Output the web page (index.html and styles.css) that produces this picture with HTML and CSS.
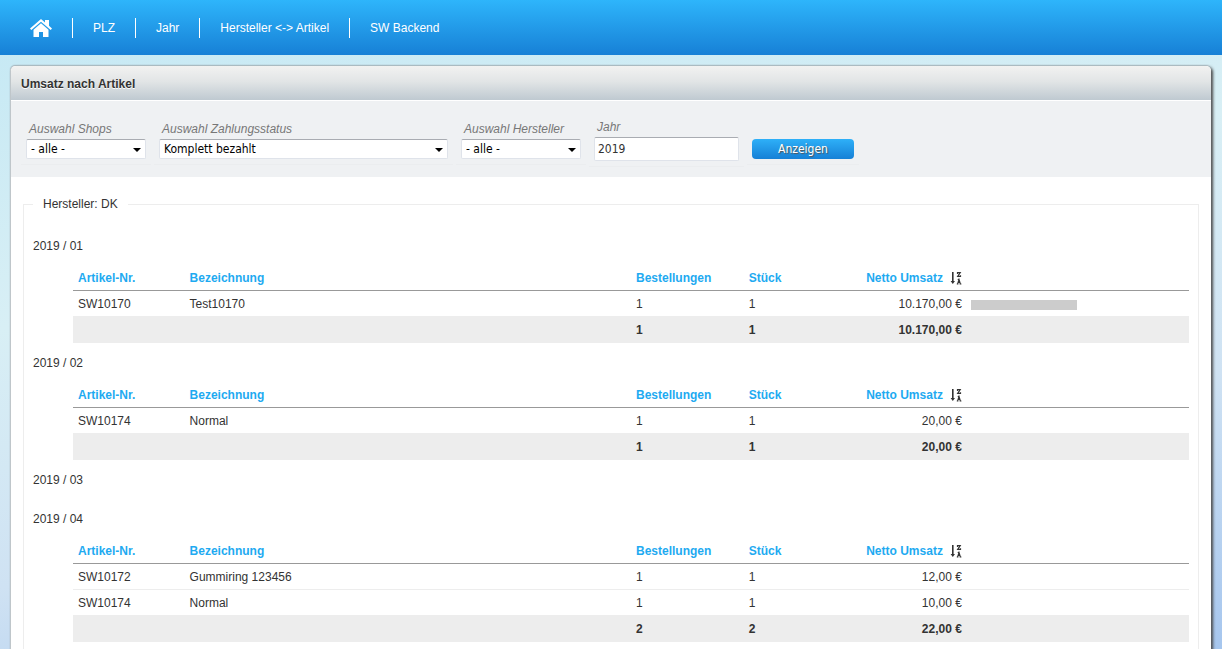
FILE: index.html
```html
<!DOCTYPE html>
<html lang="de">
<head>
<meta charset="utf-8">
<title>Umsatz nach Artikel</title>
<link rel="stylesheet" href="styles.css">
</head>
<body>
<svg class="defs" aria-hidden="true">
  <symbol id="sort" viewBox="0 0 12 13">
    <path d="M2 0h1.600v9H5l-2.200 3L.6 9H2z" fill="#333"/>
    <path d="M7.500 2V.7H10.200L7.700 4.400H10.500V3.200" fill="none" stroke="#333" stroke-width="1.200"/>
    <path d="M7.600 12L9 7.400 10.400 12M8 10.500h2M6.800 12h1.600M9.600 12h1.800M7.700 7.500H9.200" fill="none" stroke="#333" stroke-width="1.100"/>
  </symbol>
</svg>
<header>
  <nav class="nav">
    <a class="nav-item" href="#" aria-label="Startseite">
      <svg class="home" viewBox="0 0 22 18" aria-hidden="true">
        <path d="M11 0L15 3.400V1h4v5.800l3 2.700-1.300 1.500L11 2.700 1.300 11 0 9.500z" fill="#fff"/>
        <path d="M11 4.200l7.500 6.500V18H13v-5H9v5H3.500v-7.300z" fill="#fff"/>
      </svg>
    </a>
    <a class="nav-item" href="#">PLZ</a>
    <a class="nav-item" href="#">Jahr</a>
    <a class="nav-item" href="#">Hersteller &lt;-&gt; Artikel</a>
    <a class="nav-item" href="#">SW Backend</a>
  </nav>
</header>
<main class="panel">
  <h1 class="panel-title">Umsatz nach Artikel</h1>
  <form class="filter">
    <div class="field">
      <label for="shop">Auswahl Shops</label>
      <div class="select"><select id="shop"><option>- alle -</option></select></div>
    </div>
    <div class="field">
      <label for="status">Auswahl Zahlungsstatus</label>
      <div class="select wide"><select id="status"><option>Komplett bezahlt</option></select></div>
    </div>
    <div class="field">
      <label for="maker">Auswahl Hersteller</label>
      <div class="select"><select id="maker"><option>- alle -</option></select></div>
    </div>
    <div class="field">
      <label for="year">Jahr</label>
      <input id="year" type="text" value="2019">
    </div>
    <div class="field action">
      <button type="button">Anzeigen</button>
    </div>
  </form>
  <fieldset class="group">
    <legend>Hersteller: DK</legend>

    <h2 class="month">2019 / 01</h2>
    <table class="sales">
      <thead><tr><th class="c-nr">Artikel-Nr.</th><th class="c-name">Bezeichnung</th><th class="c-orders">Bestellungen</th><th class="c-net">Stück</th><th class="c-sum">Netto Umsatz<svg class="sort" aria-hidden="true"><use href="#sort"/></svg></th><th class="c-bar"></th></tr></thead>
      <tbody><tr><td>SW10170</td><td>Test10170</td><td>1</td><td>1</td><td class="num">10.170,00 €</td><td class="bar-cell"><div class="bar" style="width:50%"></div></td></tr></tbody>
      <tfoot><tr><td></td><td></td><td>1</td><td>1</td><td class="num">10.170,00 €</td><td></td></tr></tfoot>
    </table>

    <h2 class="month">2019 / 02</h2>
    <table class="sales">
      <thead><tr><th class="c-nr">Artikel-Nr.</th><th class="c-name">Bezeichnung</th><th class="c-orders">Bestellungen</th><th class="c-net">Stück</th><th class="c-sum">Netto Umsatz<svg class="sort" aria-hidden="true"><use href="#sort"/></svg></th><th class="c-bar"></th></tr></thead>
      <tbody><tr><td>SW10174</td><td>Normal</td><td>1</td><td>1</td><td class="num">20,00 €</td><td></td></tr></tbody>
      <tfoot><tr><td></td><td></td><td>1</td><td>1</td><td class="num">20,00 €</td><td></td></tr></tfoot>
    </table>

    <h2 class="month">2019 / 03</h2>

    <h2 class="month">2019 / 04</h2>
    <table class="sales">
      <thead><tr><th class="c-nr">Artikel-Nr.</th><th class="c-name">Bezeichnung</th><th class="c-orders">Bestellungen</th><th class="c-net">Stück</th><th class="c-sum">Netto Umsatz<svg class="sort" aria-hidden="true"><use href="#sort"/></svg></th><th class="c-bar"></th></tr></thead>
      <tbody>
        <tr><td>SW10172</td><td>Gummiring 123456</td><td>1</td><td>1</td><td class="num">12,00 €</td><td></td></tr>
        <tr><td>SW10174</td><td>Normal</td><td>1</td><td>1</td><td class="num">10,00 €</td><td></td></tr>
      </tbody>
      <tfoot><tr><td></td><td></td><td>2</td><td>2</td><td class="num">22,00 €</td><td></td></tr></tfoot>
    </table>
  </fieldset>
</main>
</body>
</html>
```

FILE: styles.css
```css
* { box-sizing: border-box; }

body {
  margin: 0;
  height: 100vh;
  overflow: hidden;
  font: 12px/16px "Liberation Sans", Arial, sans-serif;
  color: #333;
  background: linear-gradient(to right, #c4e8f4, #dceff6 60%, #dceff6);
  background: linear-gradient(170deg, #c4e8f4 0%, #d8eff5 38%, #cfe2f3 68%, #a6c6ee 100%);
}

.defs { position: absolute; width: 0; height: 0; }

header {
  height: 55px;
  padding: 18px 10px;
  background: linear-gradient(#2eb5fb, #1780d6);
}

.nav { display: flex; }

.nav-item {
  display: flex;
  align-items: center;
  height: 20px;
  padding: 0 20px;
  border-right: 1px solid #fff;
  color: #fff;
  text-decoration: none;
}

.nav-item:last-child { border-right: 0; }

.home { width: 22px; height: 18px; }

.panel {
  margin: 11px 11px 10px 10px;
  border-left: 1px solid #bfc6ca;
  border-radius: 5px 5px 0 0;
  background: #fff;
  box-shadow: 0 -1px 1px #a9b8be, 2px 1px 3px #444;
}

.panel-title {
  margin: 0;
  padding: 10px 10px 8px;
  border-bottom: 1px solid #fff;
  border-radius: 5px 5px 0 0;
  font-size: 12px;
  line-height: 16px;
  text-shadow: 0 1px 0 #fff;
  background: linear-gradient(#f2f2f1, #e2e5e6 45%, #bfc9d1);
}

.filter {
  display: flex;
  align-items: center;
  gap: 3px;
  padding: 17px 10px 10px;
  background: #eff1f3;
}

.field {
  padding: 0 5px 5px;
  border-bottom: 1px solid #ebedef;
}

.field label {
  display: block;
  margin: 0 3px 1px;
  line-height: 18px;
  font-style: italic;
  color: #777;
}

.action { padding-top: 19px; }

.select { position: relative; width: 120px; }
.select.wide { width: 289px; }

.select::after {
  content: "";
  position: absolute;
  right: 5px;
  top: 9px;
  border: 4px solid transparent;
  border-top-color: #000;
  border-bottom: 0;
  pointer-events: none;
}

select, input, button {
  display: block;
  font: 12px "DejaVu Sans Condensed", Tahoma, sans-serif;
}

select, input {
  width: 100%;
  border: 1px solid #dfe3ea;
  border-top-color: #a9acb2;
  border-radius: 2px;
  background: #fff;
}

select {
  appearance: none;
  height: 20px;
  padding: 0 4px;
  color: #000;
}

input {
  width: 145px;
  height: 24px;
  padding: 0 3px;
  color: #333;
}

button {
  width: 102px;
  height: 20px;
  padding: 0;
  border: 0;
  border-radius: 4px;
  color: #fff;
  text-shadow: 1px 1px 1px #555;
  background: linear-gradient(#2eb0f8, #1680d6);
}

.group {
  margin: 19px 12px 10px;
  padding: 14px 9px 20px;
  border: 1px solid #ededed;
}

.group legend { padding: 0 10px; }

.month {
  margin: 0;
  padding-top: 1px;
  font-size: 12px;
  font-weight: normal;
  line-height: 38px;
}

.sales {
  width: calc(100% - 40px);
  margin-left: 40px;
  table-layout: fixed;
  border-spacing: 0;
}

.sales th, .sales td {
  height: 26px;
  padding: 0 5px;
  border-bottom: 1px solid #ededed;
  text-align: left;
}

.sales th {
  border-bottom-color: #999;
  color: #1eaaf1;
}

.sales .num, .sales .c-sum { text-align: right; }
.sales tfoot td { font-weight: bold; background: #ededed; }
.sales .bar-cell { padding: 2px 5px 0 4px; }

.c-nr { width: 10%; }
.c-name { width: 40%; }
.c-orders { width: 10.1%; }
.c-net { width: 10%; }
.c-sum { width: 10%; }
.c-bar { width: 19.9%; }

.sort {
  width: 12px;
  height: 13px;
  margin-left: 7px;
  vertical-align: -3px;
}

.bar { height: 10px; background: #ccc; }
```
